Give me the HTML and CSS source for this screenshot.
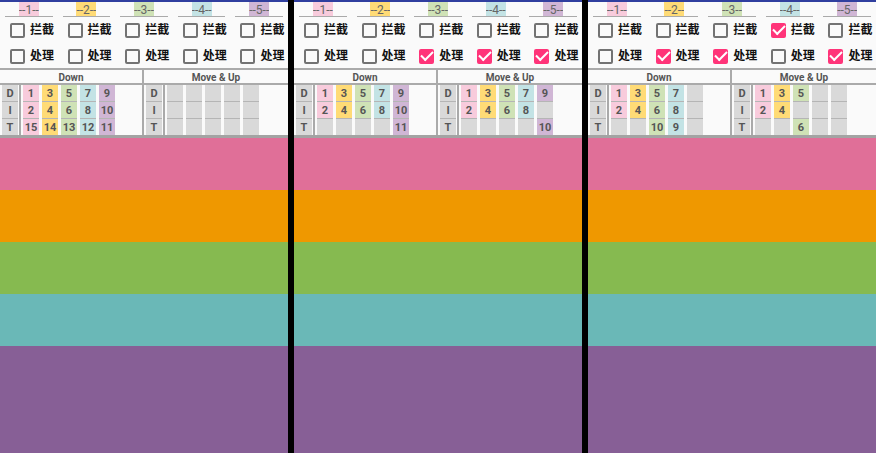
FILE: index.html
```html
<!DOCTYPE html>
<html lang="zh">
<head>
<meta charset="utf-8">
<title>Touch dispatch</title>
<link rel="stylesheet" href="styles.css">
</head>
<body>
<main class="screens"></main>
<script src="app.js"></script>
</body>
</html>
```

FILE: styles.css
```css
* { box-sizing: border-box; }

body {
  margin: 0;
  background: #000;
  color: #555;
  font-family: Roboto, "Noto Sans CJK SC", sans-serif;
}

.screens {
  display: flex;
  gap: 6px;
  min-height: 100vh;
}

.screen {
  flex: 1;
  min-width: 0;
  display: flex;
  flex-direction: column;
  background: #fafafa;
  border-top: 2px solid #303f9f;
}

.controls {
  display: grid;
  grid-template-columns: repeat(5, minmax(0, 1fr));
  height: 66px;
}

.view { padding: 0 5px; }

.field {
  display: flex;
  justify-content: center;
  height: 15px;
  margin-bottom: 4px;
  border-bottom: 1px solid #aaa;
}

.name {
  width: 20px;
  height: 14px;
  padding: 1px 0 0;
  border: 0;
  border-radius: 0;
  color: #666;
  font: 12px/13px Roboto, sans-serif;
  text-align: center;
}

.option {
  display: flex;
  align-items: center;
  gap: 5px;
  height: 18px;
  margin: 0 0 8px 5px;
  color: #111;
  font-size: 12px;
  font-weight: 700;
  line-height: 20px;
  white-space: nowrap;
}

.box {
  appearance: none;
  flex: none;
  display: grid;
  place-items: center;
  width: 15px;
  height: 15px;
  margin: 0;
  border: 2px solid #737373;
  border-radius: 2px;
}

.box:checked {
  background: #ff3479;
  border-color: #ff3479;
}

.box:checked::before {
  content: "";
  width: 10px;
  height: 5px;
  margin-top: -3px;
  border: solid #fff;
  border-width: 0 0 2px 2px;
  transform: rotate(-45deg);
}

.logs {
  display: grid;
  grid-template-columns: 1fr 1fr;
  border-top: 2px solid #aaa;
  border-bottom: 3px solid #a3a3a3;
}

.log:first-child { border-right: 2px solid #aaa; }

.title {
  margin: 0;
  height: 15px;
  border-bottom: 2px solid #aaa;
  font-size: 10px;
  font-weight: 700;
  line-height: 15px;
  text-align: center;
}

.table {
  border-collapse: separate;
  border-spacing: 0;
  font-size: 11px;
  font-weight: 700;
  line-height: 18px;
  text-align: center;
}

.table th,
.table td { padding: 0 1px 0 2px; }

.table th { border-right: 2px solid #aaa; }

.cell {
  display: block;
  width: 16px;
  height: 17px;
  border-bottom: 1px solid #b5b5b5;
  background: #d9d9d9;
}

.table tr:last-child .cell {
  height: 16px;
  border-bottom: 0;
}

.cell.pink, .name.pink { background: #f8cbdc; }
.cell.yellow, .name.yellow { background: #ffdb76; }
.cell.green, .name.green { background: #cfe2b6; }
.cell.cyan, .name.cyan { background: #c3e3e5; }
.cell.violet, .name.violet { background: #d0b6d5; }

.band { height: 52px; }
.band-1 { background: #e06f98; }
.band-2 { background: #ef9800; }
.band-3 { background: #86ba50; }
.band-4 { background: #6ab8b7; }
.band-5 { flex: 1 0 52px; background: #875f96; }
```

FILE: app.js
```js
const tints = ["pink", "yellow", "green", "cyan", "violet"];

// Each log row lists the event order per view; an empty string means no event.
const screens = [
  {
    intercept: [], handle: [],
    down: { D: [1, 3, 5, 7, 9], I: [2, 4, 6, 8, 10], T: [15, 14, 13, 12, 11] },
    move: { D: [], I: [], T: [] }
  },
  {
    intercept: [], handle: [2, 3, 4],
    down: { D: [1, 3, 5, 7, 9], I: [2, 4, 6, 8, 10], T: ["", "", "", "", 11] },
    move: { D: [1, 3, 5, 7, 9], I: [2, 4, 6, 8], T: ["", "", "", "", 10] }
  },
  {
    intercept: [3], handle: [1, 2, 4],
    down: { D: [1, 3, 5, 7], I: [2, 4, 6, 8], T: ["", "", 10, 9] },
    move: { D: [1, 3, 5], I: [2, 4], T: ["", "", 6] }
  }
];

const option = (id, text, on) =>
  `<label class="option" for="${id}"><input class="box" type="checkbox" id="${id}"${on ? " checked" : ""}>${text}</label>`;

const log = (title, rows) => `
  <section class="log">
    <h2 class="title">${title}</h2>
    <table class="table">${Object.entries(rows).map(([key, values]) => `
      <tr><th scope="row"><span class="cell">${key}</span></th>${tints.map((tint, i) =>
        `<td><span class="cell ${values[i] ? tint : ""}">${values[i] || ""}</span></td>`).join("")}</tr>`).join("")}
    </table>
  </section>`;

document.querySelector(".screens").innerHTML = screens.map((screen, s) => `
  <section class="screen">
    <div class="controls">${tints.map((tint, i) => `
      <div class="view">
        <div class="field"><input class="name ${tint}" type="text" aria-label="${i + 1}" value="--${i + 1}--"></div>
        ${option(`intercept-${s}-${i}`, "拦截", screen.intercept.includes(i))}
        ${option(`handle-${s}-${i}`, "处理", screen.handle.includes(i))}
      </div>`).join("")}
    </div>
    <div class="logs">${log("Down", screen.down)}${log("Move &amp; Up", screen.move)}</div>
    ${tints.map((_, i) => `<div class="band band-${i + 1}"></div>`).join("")}
  </section>`).join("");
```
